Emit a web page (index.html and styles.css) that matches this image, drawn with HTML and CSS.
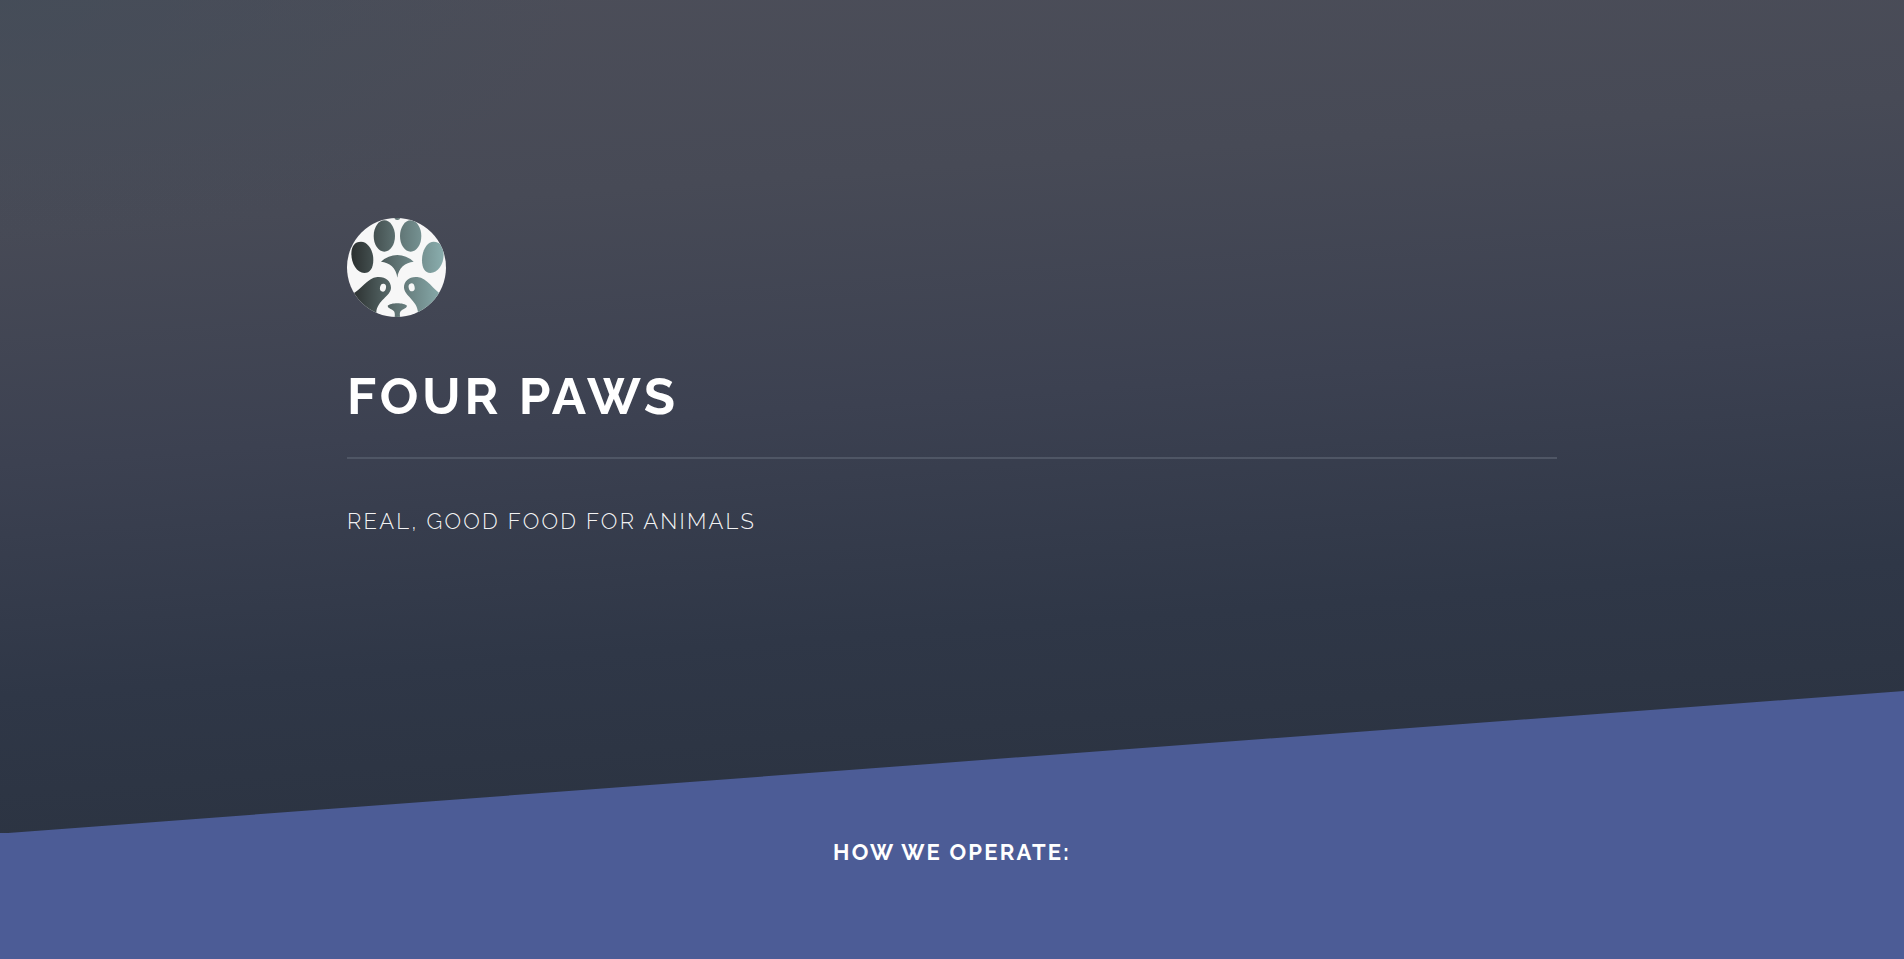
FILE: index.html
```html
<!DOCTYPE html>
<html lang="en">
<head>
<meta charset="utf-8">
<meta name="viewport" content="width=device-width, initial-scale=1">
<title>Four Paws</title>
<link rel="stylesheet" href="styles.css">
</head>
<body>
<header class="banner">
  <div class="inner">
    <svg class="logo" viewBox="36 39 297 297" role="img" aria-label="Raccoon paw logo">
      <defs>
        <linearGradient id="fur" gradientUnits="userSpaceOnUse" x1="55" y1="0" x2="320" y2="0">
          <stop offset="0" stop-color="#2d3232"/>
          <stop offset="0.5" stop-color="#5f7373"/>
          <stop offset="1" stop-color="#88abab"/>
        </linearGradient>
        <clipPath id="disc"><circle cx="184.500" cy="187.500" r="148.500"/></clipPath>
      </defs>
      <g clip-path="url(#disc)">
        <rect x="36" y="39" width="297" height="297" fill="#f7f7f7"/>
        <g fill="url(#fur)">
          <path d="M78 110C98 110 115 135 115 164C115 189 105 204 88 204C65 204 49 175 49 146C49 124 59 110 78 110Z"/>
          <path d="M296 110C316 110 326 126 326 148C326 180 308 204 286 204C270 204 261 190 261 166C261 135 277 110 296 110Z"/>
          <ellipse cx="148" cy="93" rx="32" ry="47"/>
          <ellipse cx="227" cy="93" rx="32" ry="47"/>
          <path d="M179 36H195V42Q187 48 179 42Z"/>
          <path d="M138 170Q160 150 187 150Q214 150 236 170C211 172 190 188 187 218C184 188 163 172 138 170Z"/>
          <path d="M50 268C80 254 96 219 127 216C151 214 168 228 168 248C168 273 126 286 124 322V345H36Z"/>
          <path d="M322 270C293 254 278 219 247 216C223 214 207 228 207 247C207 272 247 287 249 322V345H333Z"/>
          <path d="M158 302C166 292 208 292 216 302C215 311 199 313 196 320C193 326 195 332 196 340H178C180 332 180 326 178 320C175 313 158 311 158 302Z"/>
        </g>
        <g fill="#f7f7f7">
          <ellipse cx="144" cy="248" rx="9" ry="12" transform="rotate(12 144 248)"/>
          <ellipse cx="230" cy="247" rx="9" ry="12" transform="rotate(-12 230 247)"/>
        </g>
      </g>
    </svg>
    <h1 class="title">Four Paws</h1>
    <p class="tagline">Real, good food for animals</p>
  </div>
</header>
<main class="operate">
  <h2 class="subtitle">How we operate:</h2>
</main>
</body>
</html>
```
FILE: styles.css
```css
* { box-sizing: border-box; }

body {
  margin: 0;
  min-height: 100vh;
  display: flex;
  flex-direction: column;
  background: #4c5c96;
  color: #fff;
  font-family: Raleway, Lato, sans-serif;
  font-size: 22px;
  line-height: 36px;
}

.banner {
  padding: 218px 48px 294px;
  background:
    radial-gradient(ellipse 30% 30% at 0 0, rgba(66, 76, 88, 0.7), transparent),
    linear-gradient(176deg, #4c4e59 0%, #474a56 24%, #3c4151 48%, #2f3747 72%, #2b3341 92%);
}

.inner {
  max-width: 1210px;
  margin: 0 auto;
}

.logo {
  display: block;
  width: 99px;
  height: 99px;
}

.title {
  margin: 40px 0 0;
  padding-bottom: 22px;
  border-bottom: 2px solid #4f5665;
  font-size: 51px;
  font-weight: 700;
  line-height: 78px;
  letter-spacing: 4px;
  text-transform: uppercase;
}

.tagline {
  margin: 44px 0 0;
  color: rgba(255, 255, 255, 0.95);
  font-weight: 300;
  letter-spacing: 0.1em;
  text-transform: uppercase;
}

.operate {
  flex: 1;
  margin-top: -142px;
  padding: 143px 48px 88px;
  background: #4c5c96;
  clip-path: polygon(0 142px, 8px 142px, 100% 0, 100% 100%, 0 100%);
}

.subtitle {
  margin: 0;
  font-size: 22px;
  font-weight: 700;
  letter-spacing: 0.1em;
  text-align: center;
  text-transform: uppercase;
}
```
